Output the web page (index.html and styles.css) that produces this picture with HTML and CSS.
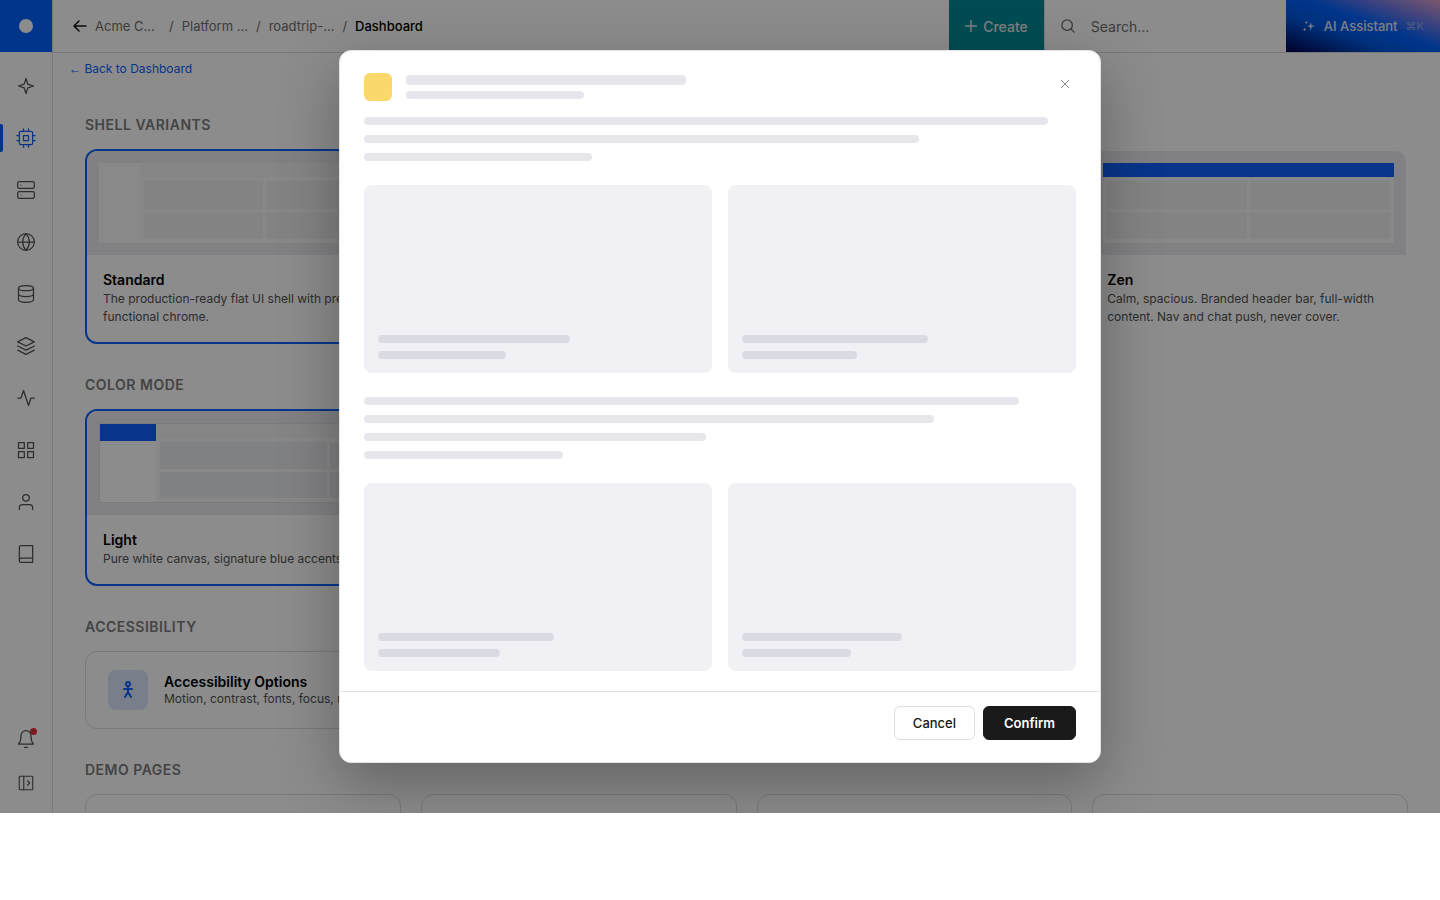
FILE: index.html
```html
<!DOCTYPE html>
<html lang="en">
<head>
    <meta charset="UTF-8">
    <meta name="viewport" content="width=device-width, initial-scale=1.0">
    <title>Dashboard</title>
    <link rel="stylesheet" href="styles.css">
</head>
<body>
<div class="app">

    <!-- sidebar -->
    <aside class="sidebar">
        <a href="#" class="logo" aria-label="Home"><span></span></a>
        <nav class="nav">
            <a href="#" aria-label="Discover"><svg viewBox="0 0 24 24"><path d="M12 3l2.200 6.800L21 12l-6.800 2.200L12 21l-2.200-6.800L3 12l6.800-2.200z"/></svg></a>
            <a href="#" class="active" aria-label="Compute"><svg viewBox="0 0 24 24"><rect x="4" y="4" width="16" height="16" rx="2"/><rect x="9" y="9" width="6" height="6"/><path d="M9 1v3M15 1v3M9 20v3M15 20v3M20 9h3M20 15h3M1 9h3M1 15h3"/></svg></a>
            <a href="#" aria-label="Servers"><svg viewBox="0 0 24 24"><rect x="2" y="2" width="20" height="8" rx="2"/><rect x="2" y="14" width="20" height="8" rx="2"/><path d="M6 6h.01M6 18h.01"/></svg></a>
            <a href="#" aria-label="Network"><svg viewBox="0 0 24 24"><circle cx="12" cy="12" r="10"/><path d="M2 12h20M12 2a15.300 15.300 0 0 1 4 10 15.300 15.300 0 0 1-4 10 15.300 15.300 0 0 1-4-10 15.300 15.300 0 0 1 4-10z"/></svg></a>
            <a href="#" aria-label="Databases"><svg viewBox="0 0 24 24"><ellipse cx="12" cy="5" rx="9" ry="3"/><path d="M21 12c0 1.660-4 3-9 3s-9-1.340-9-3M3 5v14c0 1.660 4 3 9 3s9-1.340 9-3V5"/></svg></a>
            <a href="#" aria-label="Layers"><svg viewBox="0 0 24 24"><path d="M12 2L2 7l10 5 10-5zM2 17l10 5 10-5M2 12l10 5 10-5"/></svg></a>
            <a href="#" aria-label="Activity"><svg viewBox="0 0 24 24"><path d="M22 12h-4l-3 9L9 3l-3 9H2"/></svg></a>
            <a href="#" aria-label="Apps"><svg viewBox="0 0 24 24"><path d="M3 3h7v7H3zM14 3h7v7h-7zM14 14h7v7h-7zM3 14h7v7H3z"/></svg></a>
            <a href="#" aria-label="Account"><svg viewBox="0 0 24 24"><path d="M20 21v-2a4 4 0 0 0-4-4H8a4 4 0 0 0-4 4v2"/><circle cx="12" cy="7" r="4"/></svg></a>
            <a href="#" aria-label="Docs"><svg viewBox="0 0 24 24"><path d="M4 19.500A2.500 2.500 0 0 1 6.500 17H20M6 2h14v20H6a2 2 0 0 1-2-2V4a2 2 0 0 1 2-2z"/></svg></a>
        </nav>
        <div class="nav-bottom">
            <button type="button" class="bell" aria-label="Notifications"><svg viewBox="0 0 24 24"><path d="M18 8A6 6 0 0 0 6 8c0 7-3 10-3 10h18s-3-3-3-10M10.300 22h3.400"/></svg><i></i></button>
            <button type="button" class="expand" aria-label="Expand sidebar"><svg viewBox="0 0 24 24"><rect x="3" y="3" width="18" height="18" rx="1"/><path d="M9 3v18M14 9l3 3-3 3"/></svg></button>
        </div>
    </aside>

    <div class="page">
        <!-- top bar -->
        <header class="topbar">
            <nav class="crumbs">
                <a href="#" class="back-arrow" aria-label="Back"><svg viewBox="0 0 14 14"><path d="M13 7H1M6 2L1 7l5 5"/></svg></a>
                <a href="#" class="crumb wide">Acme C...</a><span>/</span>
                <a href="#" class="crumb">Platform ...</a><span>/</span>
                <a href="#" class="crumb">roadtrip-...</a><span>/</span>
                <b>Dashboard</b>
            </nav>
            <button type="button" class="create"><svg viewBox="0 0 12 12"><path d="M6 0v12M0 6h12"/></svg>Create</button>
            <label class="search">
                <svg viewBox="0 0 16 16"><circle cx="7" cy="7" r="6"/><path d="M12 12l3 3"/></svg>
                <input type="text" placeholder="Search..." aria-label="Search">
            </label>
            <button type="button" class="assistant">
                <svg viewBox="0 0 16 16"><path d="M10 4l1 3 4 1-4 1-1 4-1-4-3-1 3-1zM5 2l.500 1.500L7 4l-1.500.500L5 6l-.500-1.500L3 4l1.500-.500zM3 10l.600 1.400L5 12l-1.400.600L3 14l-.600-1.400L1 12l1.400-.600z"/></svg>
                AI Assistant <kbd>⌘K</kbd>
            </button>
        </header>

        <main class="main">
            <a href="#" class="back-link"><span>←</span> Back to Dashboard</a>

            <div class="content">
                <section>
                    <h2>Shell Variants</h2>
                    <div class="grid four">
                        <article class="card selected">
                            <div class="preview">
                                <div class="frame">
                                    <div class="side"></div>
                                    <div class="col"><div class="bar"></div><div class="cells"><i></i><i></i><i></i><i></i></div></div>
                                </div>
                            </div>
                            <div class="text">
                                <h3>Standard</h3>
                                <p>The production-ready flat UI shell with precise functional chrome.</p>
                            </div>
                        </article>
                        <article class="card last">
                            <div class="preview">
                                <div class="frame">
                                    <div class="col"><div class="bar blue"></div><div class="cells"><i></i><i></i><i></i><i></i></div></div>
                                </div>
                            </div>
                            <div class="text">
                                <h3>Zen</h3>
                                <p>Calm, spacious. Branded header bar, full-width content. Nav and chat push, never cover.</p>
                            </div>
                        </article>
                    </div>
                </section>

                <section>
                    <h2>Color Mode</h2>
                    <div class="grid three">
                        <article class="card selected">
                            <div class="preview light">
                                <div class="frame">
                                    <div class="side"><div class="brand"></div></div>
                                    <div class="col"><div class="bar"></div><div class="cells"><i></i><i></i><i></i><i></i></div></div>
                                </div>
                            </div>
                            <div class="text">
                                <h3>Light</h3>
                                <p>Pure white canvas, signature blue accents.</p>
                            </div>
                        </article>
                    </div>
                </section>

                <section>
                    <h2>Accessibility</h2>
                    <div class="grid three">
                        <a href="#" class="option">
                            <span class="option-icon"><svg viewBox="0 0 16 20"><circle cx="8" cy="4" r="2"/><path d="M8 6v5M4 9h8M5 17l3-5 3 5"/></svg></span>
                            <span>
                                <strong>Accessibility Options</strong>
                                <small>Motion, contrast, fonts, focus, more</small>
                            </span>
                        </a>
                    </div>
                </section>

                <section>
                    <h2>Demo Pages</h2>
                    <div class="grid demo">
                        <div class="tile"></div><div class="tile"></div><div class="tile"></div><div class="tile"></div>
                    </div>
                </section>
            </div>
        </main>
    </div>

    <!-- modal -->
    <div class="overlay">
        <div class="modal" role="dialog" aria-modal="true" aria-label="Loading">
            <div class="modal-head">
                <div class="badge"></div>
                <div class="titles"><div class="line thick"></div><div class="line"></div></div>
                <button type="button" class="close" aria-label="Close"><svg viewBox="0 0 8 8"><path d="M0 0l8 8M8 0L0 8"/></svg></button>
            </div>
            <div class="modal-body">
                <div class="lines">
                    <div class="line" style="width: 96%"></div>
                    <div class="line" style="width: 78%"></div>
                    <div class="line" style="width: 32%"></div>
                </div>
                <div class="blocks">
                    <div class="block"><div class="line" style="width: 60%"></div><div class="line" style="width: 40%"></div></div>
                    <div class="block"><div class="line" style="width: 58%"></div><div class="line" style="width: 36%"></div></div>
                </div>
                <div class="lines">
                    <div class="line" style="width: 92%"></div>
                    <div class="line" style="width: 80%"></div>
                    <div class="line" style="width: 48%"></div>
                    <div class="line" style="width: 28%"></div>
                </div>
                <div class="blocks">
                    <div class="block"><div class="line" style="width: 55%"></div><div class="line" style="width: 38%"></div></div>
                    <div class="block"><div class="line" style="width: 50%"></div><div class="line" style="width: 34%"></div></div>
                </div>
            </div>
            <div class="modal-foot">
                <button type="button" class="btn">Cancel</button>
                <button type="button" class="btn primary">Confirm</button>
            </div>
        </div>
    </div>
</div>
</body>
</html>
```
FILE: styles.css
```css
*{
    margin: 0;
    padding: 0;
    box-sizing: border-box;
}
body{
    font-family: Inter, "Liberation Sans", sans-serif;
    font-size: 13px;
    color: #161616;
    background: #fff;
}
a{
    color: inherit;
    text-decoration: none;
}
button{
    font: inherit;
    border: 0;
    background: none;
    cursor: pointer;
}
svg{
    display: block;
    fill: none;
    stroke: currentColor;
    stroke-linecap: round;
    stroke-linejoin: round;
}

.app{
    position: relative;
    display: flex;
    height: calc(100vh - 87px);
    overflow: hidden;
}

/* sidebar */
.sidebar{
    display: flex;
    flex-direction: column;
    flex: none;
    width: 53px;
    border-right: 1px solid #dcdce0;
    color: #525252;
}
.logo{
    display: flex;
    align-items: center;
    justify-content: center;
    width: 52px;
    height: 52px;
    background: #0062ff;
}
.logo span{
    width: 14px;
    height: 14px;
    border-radius: 50%;
    background: #fff;
}
.nav{
    flex: 1;
    padding-top: 8px;
}
.nav a{
    position: relative;
    display: flex;
    align-items: center;
    justify-content: center;
    height: 52px;
}
.sidebar svg{
    width: 20px;
    height: 20px;
    stroke-width: 1.5;
}
.nav .active{
    color: #0f62fe;
}
.nav .active::before{
    content: "";
    position: absolute;
    left: 0;
    width: 3px;
    height: 28px;
    border-radius: 0 2px 2px 0;
    background: #0062ff;
}
.nav-bottom{
    padding-bottom: 8px;
}
.nav-bottom button{
    position: relative;
    display: flex;
    align-items: center;
    justify-content: center;
    width: 52px;
    height: 44px;
    color: #525252;
}
.sidebar .expand svg{
    width: 18px;
    height: 18px;
}
.bell i{
    position: absolute;
    top: 11px;
    right: 15px;
    width: 7px;
    height: 7px;
    border-radius: 50%;
    background: #e5303a;
}

/* top bar */
.page{
    display: flex;
    flex-direction: column;
    flex: 1;
    min-width: 0;
}
.topbar{
    display: flex;
    flex: none;
    height: 53px;
    border-bottom: 1px solid #dcdce0;
}
.crumbs{
    display: flex;
    align-items: center;
    flex: 1;
    gap: 8px;
    padding-left: 20px;
    color: #6f6f6f;
}
.crumbs b{
    font-weight: 500;
    color: #000;
}
.crumb.wide{
    width: 66px;
}
.back-arrow svg{
    width: 14px;
    height: 14px;
    stroke-width: 1.5;
    color: #161616;
}
.create,
.assistant{
    display: flex;
    align-items: center;
    gap: 6px;
    font-weight: 500;
    color: #e4e8ee;
}
.create{
    padding: 0 16px;
    background: #008a95;
    font-size: 14px;
}
.create svg{
    width: 12px;
    height: 12px;
    stroke-width: 1.5;
}
.search{
    display: flex;
    align-items: center;
    width: 242px;
    gap: 16px;
    padding: 0 16px;
    border-left: 1px solid #dcdce0;
    color: #6f6f6f;
}
.search svg{
    width: 14px;
    height: 14px;
    stroke-width: 1.5;
}
.search input{
    flex: 1;
    min-width: 0;
    border: 0;
    outline: 0;
    background: none;
    font: inherit;
    font-size: 14px;
}
.search input::placeholder{
    color: #6f6f6f;
}
.assistant{
    gap: 8px;
    padding: 0 16px;
    background: linear-gradient(20deg, #00004c 0%, #0058e0 35%, #0062ff 55%, #6a78e8 75%, #e0a0c8 100%);
}
.assistant svg{
    width: 14px;
    height: 14px;
    fill: currentColor;
    stroke: none;
}
.assistant kbd{
    font-family: inherit;
    font-size: 11px;
    opacity: .4;
}

/* page content */
.back-link{
    display: block;
    padding: 8px 16px 0;
    font-size: 12px;
    line-height: 16px;
    color: #0f62fe;
}
.back-link span{
    font-family: "Liberation Sans", sans-serif;
}
.content{
    display: flex;
    flex-direction: column;
    gap: 32px;
    padding: 39px 32px 32px;
}
.content h2{
    margin-bottom: 16px;
    font-size: 14px;
    font-weight: 600;
    line-height: 17px;
    letter-spacing: .5px;
    text-transform: uppercase;
    color: #7c7c7c;
}
.grid{
    display: grid;
    gap: 16px;
}
.four{
    grid-template-columns: repeat(4, 1fr);
}
.three{
    grid-template-columns: repeat(3, 1fr);
}
.demo{
    grid-template-columns: repeat(4, 1fr);
    gap: 20px;
}
.card{
    border: 2px solid transparent;
    border-radius: 12px;
    overflow: hidden;
}
.card.selected{
    border-color: #0f62fe;
}
.card.last{
    grid-column: -2;
}
.preview{
    padding: 12px;
    background: #ececf0;
}
.frame{
    display: flex;
    height: 80px;
    background: #f8f8f8;
}
.side{
    width: 41px;
    background: #fafafa;
}
.col{
    display: flex;
    flex-direction: column;
    flex: 1;
}
.bar{
    height: 14px;
    background: #f2f2f2;
}
.bar.blue{
    background: #0f62fe;
}
.cells{
    display: grid;
    flex: 1;
    grid-template-columns: 1fr 1fr;
    gap: 3px;
    padding: 4px;
}
.cells i{
    background: #eee;
}
.light .frame{
    border: 1px solid #e0e0e4;
}
.light .side{
    width: 56px;
    background: #fff;
}
.light .brand{
    height: 17px;
    background: #0f62fe;
}
.light .cells i{
    background: #eaebee;
}
.text{
    padding: 16px;
}
.text h3,
.option strong{
    font-size: 14px;
    font-weight: 600;
    line-height: 17px;
    color: #000;
}
.text h3{
    margin-bottom: 2px;
}
.text p,
.option small{
    font-size: 12px;
    line-height: 18px;
    color: #525252;
}
.text p{
    line-height: 18px;
}
.option{
    display: flex;
    align-items: center;
    gap: 16px;
    padding: 18px 22px;
    border: 1px solid #dcdce0;
    border-radius: 12px;
}
.option strong,
.option small{
    display: block;
}
.option-icon{
    display: flex;
    align-items: center;
    justify-content: center;
    width: 40px;
    height: 40px;
    border-radius: 8px;
    background: #dbe8fb;
    color: #0f62fe;
}
.option-icon svg{
    width: 16px;
    height: 20px;
    stroke-width: 2;
}
.tile{
    height: 120px;
    border: 1px solid #dcdce0;
    border-radius: 12px;
}

/* modal */
.overlay{
    position: absolute;
    inset: 0;
    display: flex;
    align-items: center;
    justify-content: center;
    background: rgba(0, 0, 0, .45);
}
.modal{
    width: 90%;
    max-width: 762px;
    border: 1px solid #e4e4e8;
    border-radius: 12px;
    background: #fff;
    box-shadow: 0 20px 60px rgba(0, 0, 0, .3);
}
.modal-head{
    display: flex;
    gap: 14px;
    padding: 22px 24px 16px;
}
.badge{
    width: 28px;
    height: 28px;
    border-radius: 6px;
    background: #fad86c;
}
.titles{
    flex: 1;
    padding-top: 2px;
}
.line{
    height: 8px;
    border-radius: 4px;
    background: #e6e6eb;
}
.titles .line{
    width: 178px;
}
.titles .thick{
    width: 280px;
    height: 10px;
    margin-bottom: 6px;
}
.close{
    display: flex;
    align-items: center;
    justify-content: center;
    width: 22px;
    height: 22px;
    color: #8c8c8c;
}
.close svg{
    width: 8px;
    height: 8px;
    stroke-width: 1;
}
.modal-body{
    display: flex;
    flex-direction: column;
    gap: 24px;
    padding: 0 24px 20px;
}
.lines{
    display: flex;
    flex-direction: column;
    gap: 10px;
}
.blocks{
    display: grid;
    grid-template-columns: 1fr 1fr;
    gap: 16px;
}
.block{
    display: flex;
    flex-direction: column;
    justify-content: flex-end;
    gap: 8px;
    height: 188px;
    padding: 14px;
    border-radius: 8px;
    background: #f0f0f5;
}
.block .line{
    background: #dadae3;
}
.modal-foot{
    display: flex;
    justify-content: flex-end;
    gap: 8px;
    padding: 14px 24px 22px;
    border-top: 1px solid #e0e0e0;
}
.btn{
    height: 34px;
    padding: 0 18px;
    border: 1px solid #dedee2;
    border-radius: 6px;
    font-weight: 500;
    color: #161616;
}
.btn.primary{
    padding: 0 20px;
    border-color: #1a1a1a;
    background: #1a1a1a;
    font-weight: 600;
    color: #fff;
}
```
